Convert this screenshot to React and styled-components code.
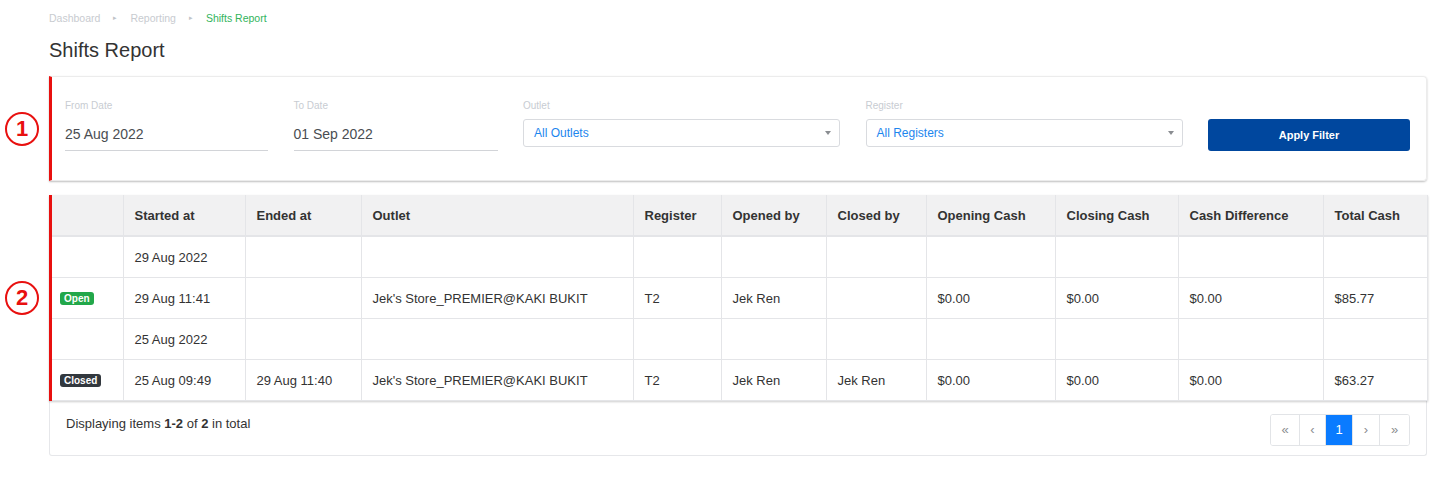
import React from 'react';
import styled, { createGlobalStyle } from 'styled-components';

const GlobalStyle = createGlobalStyle`
  html, body {
    margin: 0;
    padding: 0;
    background: #fff;
    font-family: "Liberation Sans", Arial, sans-serif;
    color: #333;
  }
  * { box-sizing: border-box; }
`;

const columns = [
  { key: 'status', label: '', width: 71 },
  { key: 'start', label: 'Started at', width: 122 },
  { key: 'end', label: 'Ended at', width: 116 },
  { key: 'outlet', label: 'Outlet', width: 272 },
  { key: 'register', label: 'Register', width: 88 },
  { key: 'openedBy', label: 'Opened by', width: 105 },
  { key: 'closedBy', label: 'Closed by', width: 100 },
  { key: 'openCash', label: 'Opening Cash', width: 129 },
  { key: 'closeCash', label: 'Closing Cash', width: 123 },
  { key: 'diff', label: 'Cash Difference', width: 145 },
  { key: 'total', label: 'Total Cash', width: 104 },
];

const rows = [
  { day: '29 Aug 2022' },
  {
    status: 'Open',
    start: '29 Aug 11:41',
    end: '',
    outlet: "Jek's Store_PREMIER@KAKI BUKIT",
    register: 'T2',
    openedBy: 'Jek Ren',
    closedBy: '',
    openCash: '$0.00',
    closeCash: '$0.00',
    diff: '$0.00',
    total: '$85.77',
  },
  { day: '25 Aug 2022' },
  {
    status: 'Closed',
    start: '25 Aug 09:49',
    end: '29 Aug 11:40',
    outlet: "Jek's Store_PREMIER@KAKI BUKIT",
    register: 'T2',
    openedBy: 'Jek Ren',
    closedBy: 'Jek Ren',
    openCash: '$0.00',
    closeCash: '$0.00',
    diff: '$0.00',
    total: '$63.27',
  },
];

const App = () => {
  return (
    <>
      <GlobalStyle />
      <Page>
        <Header>
          <Breadcrumb>
            <Crumb>Dashboard</Crumb>
            <CrumbSep>▸</CrumbSep>
            <Crumb>Reporting</Crumb>
            <CrumbSep>▸</CrumbSep>
            <Crumb $active>Shifts Report</Crumb>
          </Breadcrumb>
          <Title>Shifts Report</Title>
        </Header>

        {/* Filtros */}
        <AnnotatedRow>
          <MarkerColumn>
            <Marker>1</Marker>
          </MarkerColumn>
          <FilterCard>
            <FilterField>
              <Label>From Date</Label>
              <DateInput>25 Aug 2022</DateInput>
            </FilterField>
            <FilterField>
              <Label>To Date</Label>
              <DateInput>01 Sep 2022</DateInput>
            </FilterField>
            <FilterField>
              <Label>Outlet</Label>
              <Select>All Outlets<Caret /></Select>
            </FilterField>
            <FilterField>
              <Label>Register</Label>
              <Select>All Registers<Caret /></Select>
            </FilterField>
            <FilterField>
              <Label aria-hidden="true">&nbsp;</Label>
              <ApplyButton>Apply Filter</ApplyButton>
            </FilterField>
          </FilterCard>
        </AnnotatedRow>

        {/* Tabela */}
        <AnnotatedRow>
          <MarkerColumn>
            <Marker>2</Marker>
          </MarkerColumn>
          <TableCard>
            <Table>
              <colgroup>
                {columns.map((c) => (
                  <col key={c.key} style={{ width: c.width }} />
                ))}
              </colgroup>
              <thead>
                <tr>
                  {columns.map((c) => (
                    <Th key={c.key}>{c.label}</Th>
                  ))}
                </tr>
              </thead>
              <tbody>
                {rows.map((r, i) =>
                  r.day ? (
                    <tr key={i}>
                      {columns.map((c) => (
                        <Td key={c.key}>{c.key === 'start' ? r.day : ''}</Td>
                      ))}
                    </tr>
                  ) : (
                    <tr key={i}>
                      {columns.map((c) => (
                        <Td key={c.key}>
                          {c.key === 'status' ? (
                            <Badge $variant={r.status}>{r.status}</Badge>
                          ) : (
                            r[c.key]
                          )}
                        </Td>
                      ))}
                    </tr>
                  )
                )}
              </tbody>
            </Table>
          </TableCard>
        </AnnotatedRow>

        <FooterRow>
          <TableFooter>
            <Summary>
              Displaying items <b>1-2</b> of <b>2</b> in total
            </Summary>
            <Pagination>
              <PageButton $w={28}>«</PageButton>
              <PageButton $w={26}>‹</PageButton>
              <PageButton $w={27} $active>1</PageButton>
              <PageButton $w={27}>›</PageButton>
              <PageButton $w={30}>»</PageButton>
            </Pagination>
          </TableFooter>
        </FooterRow>
      </Page>
    </>
  );
};

export default App;

// --- Estilos ---

const Page = styled.div`
  width: 1440px;
  padding: 11px 13px 20px 0;
`;

const Header = styled.div`
  padding-left: 49px;
`;

const Breadcrumb = styled.div`
  display: flex;
  align-items: center;
  gap: 13px;
  height: 14px;
  font-size: 10.5px;
`;

const Crumb = styled.span`
  color: ${(p) => (p.$active ? '#32b45c' : '#c8cbd0')};
`;

const CrumbSep = styled.span`
  color: #c0c3c8;
  font-size: 7px;
`;

const Title = styled.h1`
  margin: 13px 0 0;
  font-size: 20px;
  line-height: 24px;
  font-weight: normal;
  color: #333;
`;

const AnnotatedRow = styled.div`
  display: flex;
  align-items: stretch;
  margin-top: 14px;
`;

const MarkerColumn = styled.div`
  width: 49px;
  flex-shrink: 0;
  display: flex;
  align-items: center;
  padding-left: 5px;
`;

const Marker = styled.div`
  width: 34px;
  height: 34px;
  border: 2px solid #e8100f;
  border-radius: 50%;
  color: #e8100f;
  font-weight: bold;
  font-size: 22px;
  line-height: 30px;
  text-align: center;
`;

const FilterCard = styled.div`
  flex: 1;
  display: grid;
  grid-template-columns: 203px 204px 317px 317px 1fr;
  column-gap: 25.5px;
  padding: 21px 16px 29px 13px;
  border: 1px solid #ececec;
  border-left: 3px solid #e8100f;
  border-radius: 0 4px 4px 0;
  box-shadow: 0 1px 2px rgba(0, 0, 0, 0.25);
`;

const FilterField = styled.div`
  display: flex;
  flex-direction: column;
`;

const Label = styled.label`
  font-size: 10px;
  line-height: 12px;
  color: #c8ccd2;
  margin: 2px 0 7px;
`;

const DateInput = styled.div`
  height: 32px;
  line-height: 31px;
  font-size: 14px;
  color: #4a4d52;
  border-bottom: 1px solid #d2d4d8;
`;

const Select = styled.div`
  position: relative;
  height: 28px;
  line-height: 27px;
  padding: 0 10px;
  font-size: 12px;
  color: #1c86ee;
  border: 1px solid #d9dbdf;
  border-radius: 3px;
`;

const Caret = styled.span`
  position: absolute;
  right: 8px;
  top: 11px;
  width: 0;
  height: 0;
  border-left: 3.5px solid transparent;
  border-right: 3.5px solid transparent;
  border-top: 4px solid #8a8d91;
`;

const ApplyButton = styled.button`
  height: 32px;
  border: none;
  border-radius: 3px;
  background: #00479e;
  color: #fff;
  font-family: inherit;
  font-size: 11px;
  font-weight: bold;
  cursor: pointer;
`;

const TableCard = styled.div`
  flex: 1;
  border-left: 3px solid #e8100f;
  box-shadow: 0 1px 2px rgba(0, 0, 0, 0.2);
`;

const Table = styled.table`
  width: 100%;
  border-collapse: collapse;
  table-layout: fixed;
  font-size: 13px;
`;

const Th = styled.th`
  height: 41px;
  padding: 0 11px;
  text-align: left;
  font-weight: bold;
  color: #333;
  background: #f1f1f2;
  border-right: 1px solid #e4e5e8;
  border-bottom: 2px solid #e4e5e8;
`;

const Td = styled.td`
  height: 41px;
  padding: 1px 11px 0;
  color: #333;
  white-space: nowrap;
  border-right: 1px solid #e4e5e8;
  border-bottom: 1px solid #e4e5e8;
  &:first-child { padding: 0 8px; }
`;

const Badge = styled.span`
  display: inline-block;
  padding: 0 4px;
  height: 13px;
  line-height: 13px;
  border-radius: 3px;
  font-size: 10px;
  font-weight: bold;
  color: #fff;
  background: ${(p) => (p.$variant === 'Open' ? '#22a74a' : '#32383e')};
`;

const FooterRow = styled.div`
  padding-left: 49px;
`;

const TableFooter = styled.div`
  display: flex;
  justify-content: space-between;
  align-items: flex-start;
  padding: 13px 16px 9px 16px;
  border: 1px solid #e6e7ea;
  border-top: none;
  border-radius: 0 0 3px 3px;
`;

const Summary = styled.div`
  margin-top: 2px;
  font-size: 13px;
  line-height: 16px;
  color: #333;
  & b { font-weight: bold; }
`;

const Pagination = styled.div`
  display: flex;
  border: 1px solid #e2e4e7;
  border-radius: 3px;
  overflow: hidden;
`;

const PageButton = styled.span`
  width: ${(p) => p.$w}px;
  height: 30px;
  display: flex;
  align-items: center;
  justify-content: center;
  font-size: 13px;
  color: ${(p) => (p.$active ? '#fff' : '#8a8d91')};
  background: ${(p) => (p.$active ? '#0a7bff' : '#fff')};
  border-left: 1px solid #e2e4e7;
  &:first-child { border-left: none; }
`;
